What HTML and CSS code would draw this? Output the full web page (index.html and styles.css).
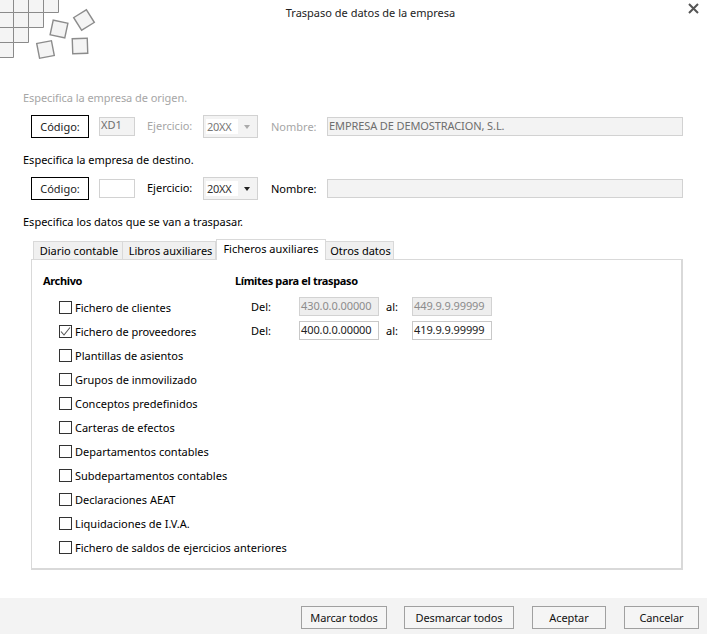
FILE: index.html
```html
<!DOCTYPE html>
<html lang="es">
<head>
<meta charset="utf-8">
<title>Traspaso de datos de la empresa</title>
<link rel="stylesheet" href="styles.css">
</head>
<body>
<div class="dialog">
  <header class="head">
    <svg class="logo" width="100" height="60" viewBox="0 0 100 60">
      <g class="tile">
        <path d="M-2 -2H13.500V12.500H-2Z"/><path d="M13.500 -2H28.500V12.500H13.500Z"/><path d="M28.500 -2H43.500V12.500H28.500Z"/><path d="M43.500 -2H58.500V12.500H43.500Z"/>
        <path d="M-2 12.500H13.500V27.500H-2Z"/><path d="M13.500 12.500H28.500V27.500H13.500Z"/><path d="M28.500 12.500H43.500V27.500H28.500Z"/>
        <path d="M-2 27.500H13.500V42.500H-2Z"/><path d="M13.500 27.500H28.500V42.500H13.500Z"/>
        <path d="M-2 42.500H13.500V57.500H-2Z"/>
      </g>
      <g class="loose">
        <rect x="-7.500" y="-7.500" width="15" height="15" transform="translate(84 20) rotate(-32)"/>
        <rect x="-7.500" y="-7.500" width="15" height="15" transform="translate(59 29) rotate(12)"/>
        <rect x="-7.500" y="-7.500" width="15" height="15" transform="translate(80 46) rotate(-2)"/>
        <rect x="-7.500" y="-7.500" width="15" height="15" transform="translate(45.500 49.500) rotate(-11)"/>
      </g>
    </svg>
    <h1 class="title">Traspaso de datos de la empresa</h1>
    <svg class="close" width="11" height="11" viewBox="0 0 11 11"><path d="M1 1L10 10M10 1L1 10"/></svg>
  </header>

  <main class="body">
    <section class="block block-origin is-off">
      <p class="lead">Especifica la empresa de origen.</p>
      <div class="company">
        <button class="code-btn">Código:</button>
        <span class="field f-code ro">XD1</span>
        <span class="lbl l-year">Ejercicio:</span>
        <span class="combo"><span class="combo-val">20XX</span><span class="caret"></span></span>
        <span class="lbl l-name">Nombre:</span>
        <span class="field f-name ro">EMPRESA DE DEMOSTRACION, S.L.</span>
      </div>
    </section>

    <section class="block block-dest">
      <p class="lead">Especifica la empresa de destino.</p>
      <div class="company">
        <button class="code-btn">Código:</button>
        <span class="field f-code"></span>
        <span class="lbl l-year">Ejercicio:</span>
        <span class="combo"><span class="combo-val">20XX</span><span class="caret"></span></span>
        <span class="lbl l-name">Nombre:</span>
        <span class="field f-name ro"></span>
      </div>
    </section>

    <p class="lead lead-data">Especifica los datos que se van a traspasar.</p>

    <div class="tabs">
      <span class="tab t1">Diario contable</span>
      <span class="tab t2">Libros auxiliares</span>
      <span class="tab t3 active">Ficheros auxiliares</span>
      <span class="tab t4">Otros datos</span>
    </div>
    <div class="panel">
      <div class="col-files">
        <h2 class="sub">Archivo</h2>
        <ul class="checks">
          <li><span class="box"></span>Fichero de clientes</li>
          <li><span class="box"><svg width="11" height="11" viewBox="0 0 11 11"><path d="M1 5.500L4 9L10 1.500"/></svg></span>Fichero de proveedores</li>
          <li><span class="box"></span>Plantillas de asientos</li>
          <li><span class="box"></span>Grupos de inmovilizado</li>
          <li><span class="box"></span>Conceptos predefinidos</li>
          <li><span class="box"></span>Carteras de efectos</li>
          <li><span class="box"></span>Departamentos contables</li>
          <li><span class="box"></span>Subdepartamentos contables</li>
          <li><span class="box"></span>Declaraciones AEAT</li>
          <li><span class="box"></span>Liquidaciones de I.V.A.</li>
          <li><span class="box"></span>Fichero de saldos de ejercicios anteriores</li>
        </ul>
      </div>
      <div class="col-limits">
        <h2 class="sub">Límites para el traspaso</h2>
        <div class="range">
          <span class="r-del">Del:</span><span class="field r-field off">430.0.0.00000</span>
          <span class="r-al">al:</span><span class="field r-field off">449.9.9.99999</span>
        </div>
        <div class="range">
          <span class="r-del">Del:</span><span class="field r-field on">400.0.0.00000</span>
          <span class="r-al">al:</span><span class="field r-field on">419.9.9.99999</span>
        </div>
      </div>
    </div>
  </main>

  <footer class="foot">
    <button class="btn b-mark">Marcar todos</button>
    <button class="btn b-unmark">Desmarcar todos</button>
    <button class="btn b-ok">Aceptar</button>
    <button class="btn b-cancel">Cancelar</button>
  </footer>
</div>
</body>
</html>
```
FILE: styles.css
```css
* { box-sizing: border-box; }

html, body {
  margin: 0;
  padding: 0;
  background: #fff;
}

body {
  font-family: "Noto Sans", "Open Sans", sans-serif;
  font-size: 11px;
  color: #000;
  overflow: hidden;
}

.dialog {
  width: 707px;
  height: 634px;
  display: flex;
  flex-direction: column;
}

/* Header with the tile emblem */
.head {
  position: relative;
  height: 90px;
  flex: none;
}

.logo {
  position: absolute;
  left: 0;
  top: 0;
}

.tile path {
  fill: #f4f4f4;
  stroke: #8a8a8a;
  stroke-width: 1;
}

.loose rect {
  fill: #f4f4f4;
  stroke: #8c8c8c;
  stroke-width: 1.400;
}

.title {
  margin: 0;
  padding-top: 5px;
  padding-left: 34px;
  text-align: center;
  font-size: 11px;
  line-height: 16px;
  font-weight: 400;
  color: #222;
}

.close {
  position: absolute;
  left: 688px;
  top: 3px;
}

.close path {
  stroke: #555;
  stroke-width: 2;
  fill: none;
}

/* Form body */
.body {
  flex: 1;
  padding: 0 24px 0 23px;
}

.lead {
  margin: 0;
  line-height: 16px;
}

.block-origin .lead {
  color: #a6a6a6;
  letter-spacing: -0.06px;
}

.block-dest { margin-top: 14px; }

.lead-data { margin-top: 14px; }

.company {
  display: flex;
  align-items: center;
  height: 23px;
  margin-top: 9px;
  margin-left: 8px;
}

.code-btn {
  width: 58px;
  height: 23px;
  padding: 0;
  border: 1px solid #000;
  background: #fff;
  color: #222;
  font: inherit;
}

.field {
  display: block;
  border: 1px solid #d2d2d2;
  background: #fff;
  line-height: 16px;
  padding: 0 1px;
  white-space: nowrap;
}

.f-code {
  width: 36px;
  height: 19px;
  margin-left: 10px;
  line-height: 14px;
}

.f-name {
  width: 356px;
  height: 19px;
  letter-spacing: -0.1px;
}

.ro {
  background: #f3f3f3;
  color: #6e6e6e;
}

.lbl { line-height: 16px; }

.l-year {
  width: 56px;
  margin-left: 12px;
  margin-bottom: 2px;
}

.l-name {
  width: 56px;
  margin-left: 13px;
}

.is-off .lbl { color: #a6a6a6; }

.combo {
  width: 55px;
  height: 23px;
  border: 1px solid #d2d2d2;
  background: #f3f3f3;
  display: flex;
  align-items: center;
  justify-content: space-between;
  padding-left: 2px;
  padding-right: 7px;
}

.combo-val {
  width: 32px;
  line-height: 15px;
  padding-left: 1px;
  letter-spacing: -0.3px;
  background: #fff;
  color: #333;
}

.is-off .combo-val { color: #777; }

.caret {
  width: 0;
  height: 0;
  border-left: 3.500px solid transparent;
  border-right: 3.500px solid transparent;
  border-top: 4px solid #222;
}

.is-off .caret { border-top-color: #aaa; }

/* Tab strip */
.tabs {
  display: flex;
  align-items: flex-end;
  height: 22px;
  margin-top: 7px;
  margin-left: 10px;
  position: relative;
  z-index: 1;
}

.tab {
  height: 18px;
  border: 1px solid #d9d9d9;
  border-bottom: 0;
  border-left-width: 0;
  background: #f0f0f0;
  line-height: 18px;
  text-align: center;
}

.t1 { width: 90px; border-left-width: 1px; padding-left: 2px; }
.t2 { width: 93px; padding-left: 3px; }
.t3 { width: 110px; }
.t4 { width: 68px; padding-left: 2px; }

.tab.active {
  height: 21px;
  background: #fff;
  border-left-width: 1px;
  margin-bottom: -1px;
  line-height: 18px;
}

.panel {
  height: 311px;
  margin-left: 8px;
  border: 1px solid #d9d9d9;
  border-right-width: 2px;
  border-bottom-width: 2px;
  display: flex;
  padding: 13px 0 0 11px;
}

.sub {
  margin: 0;
  font-size: 11px;
  line-height: 16px;
  font-weight: 700;
  letter-spacing: -0.35px;
}

.col-files { width: 192px; flex: none; }

.checks {
  list-style: none;
  margin: 6px 0 0;
  padding: 0 0 0 16px;
}

.checks li {
  height: 24px;
  display: flex;
  align-items: center;
  white-space: nowrap;
}

.box {
  width: 13px;
  height: 13px;
  border: 1px solid #333;
  background: #fff;
  margin-right: 3px;
  flex: none;
  display: flex;
  align-items: center;
  justify-content: center;
}

.box svg path {
  fill: none;
  stroke: #555;
  stroke-width: 1.100;
}

.range {
  display: flex;
  align-items: center;
  height: 19px;
  margin-top: 5px;
}

.col-limits .sub + .range { margin-top: 8px; }

.r-del {
  width: 48px;
  margin-left: 16px;
}

.r-al {
  width: 26px;
  margin-left: 7px;
}

.r-field {
  width: 80px;
  height: 19px;
  line-height: 15px;
  padding: 0 1px;
  letter-spacing: -0.1px;
}

.off {
  background: #eeeeee;
  color: #8c8c8c;
}

.on {
  border-color: #c8c8c8;
  color: #222;
}

/* Command bar */
.foot {
  flex: none;
  height: 36px;
  background: #f3f3f3;
  padding-top: 8px;
  padding-left: 301px;
  display: flex;
  align-items: flex-start;
}

.btn {
  height: 23px;
  padding: 0;
  border: 1px solid #a0a0a0;
  background: #f5f5f5;
  color: #111;
  font: inherit;
  letter-spacing: -0.1px;
}

.b-mark { width: 86px; }
.b-unmark { width: 110px; margin-left: 17px; }
.b-ok { width: 74px; margin-left: 18px; }
.b-cancel { width: 75px; margin-left: 18px; }
```
